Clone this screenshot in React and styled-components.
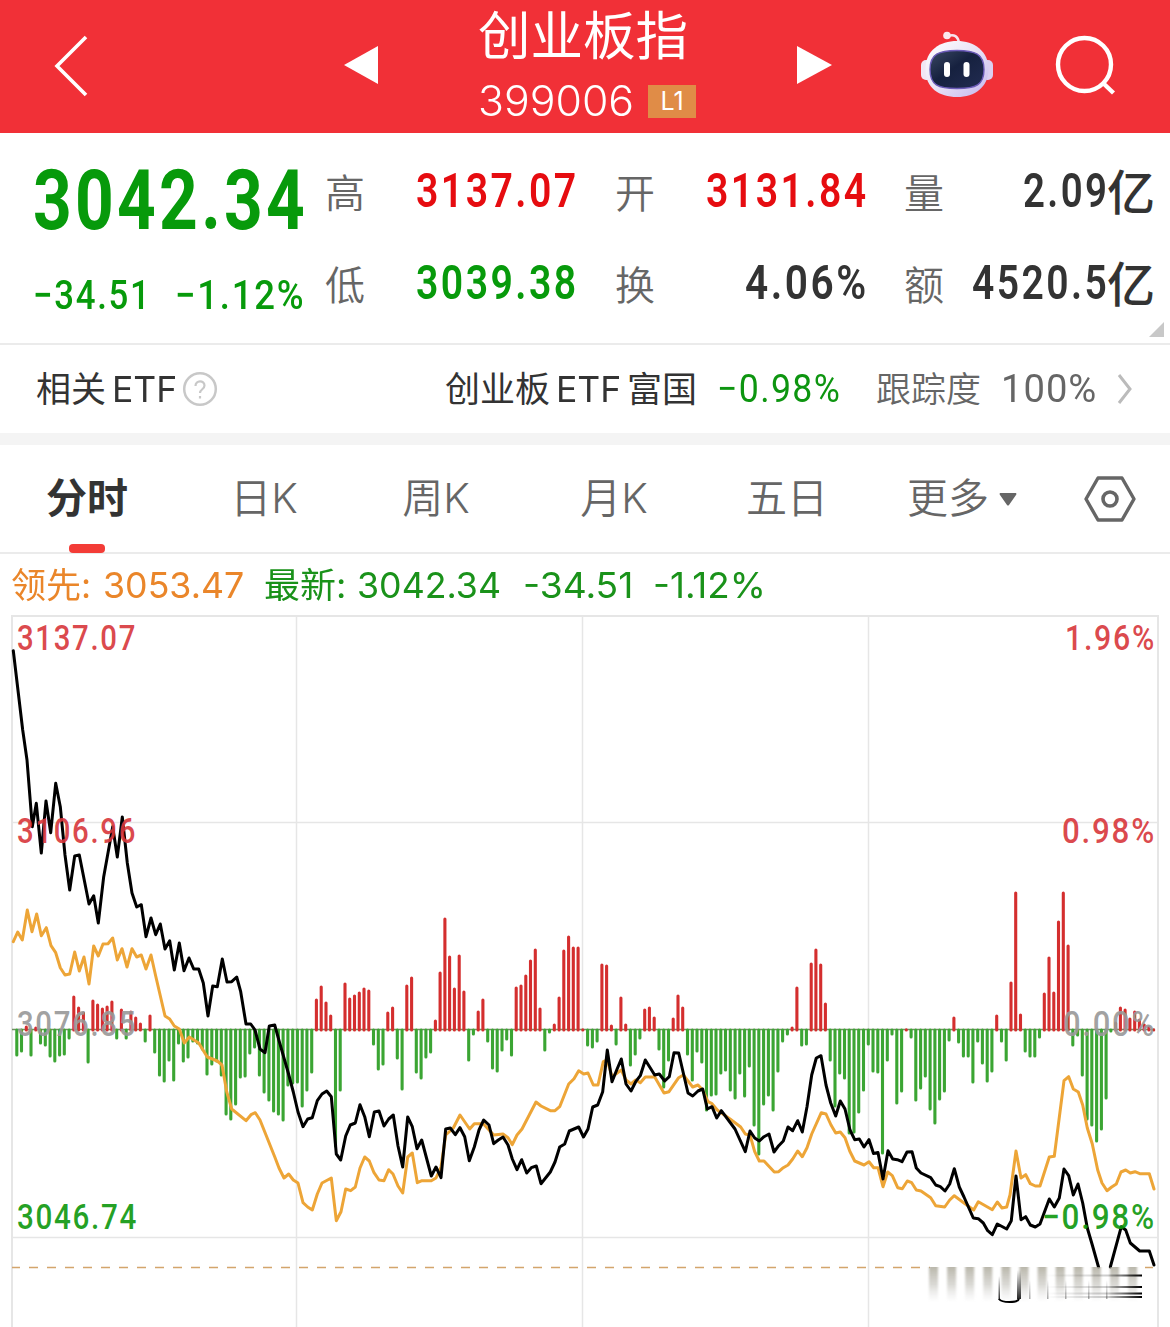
import React, { useLayoutEffect, useRef, useState } from 'react'
import styled, { createGlobalStyle } from 'styled-components'

const GlobalStyle = createGlobalStyle`
  body {
    margin: 0;
    background: #fff;
    font-family: Inter, 'Noto Sans CJK SC', sans-serif;
    color: #333;
  }

  * {
    box-sizing: border-box;
  }

  svg {
    display: block;
    flex: none;
  }
`;

const colors = {
  red: '#e60c10',
  green: '#079a0b',
  ink: '#333',
  grey: '#666',
}

/* ---------- fixed-width text ---------- */

const FitBox = styled.span`
  display: inline-block;
  flex: none;
  width: ${props => props.$width}px;
  white-space: nowrap;
`;

const FitInner = styled.span`
  display: inline-block;
  letter-spacing: ${props => props.$tracking}px;
  transform-origin: 0 50%;
`;

// Squeezes or stretches a run of text so it always fills the given width
const Fit = ({ width, tracking = 0, children }) => {
  const ref = useRef(null)
  const [scale, setScale] = useState(1)

  useLayoutEffect(() => {
    setScale(width / (ref.current.offsetWidth - tracking))
  }, [width, tracking, children])

  return (
    <FitBox $width={width}>
      <FitInner ref={ref} $tracking={tracking} style={{ transform: `scaleX(${scale})` }}>{children}</FitInner>
    </FitBox>
  )
}

/* ---------- header ---------- */

const Header = styled.header`
  display: flex;
  align-items: flex-start;
  height: 133px;
  background: #f13037;
  color: #fff;
`;

const HeaderIcon = styled.div`
  width: ${props => props.$width}px;
  margin: ${props => props.$top}px 0 0 ${props => props.$left}px;
`;

const HeaderTitle = styled.div`
  width: 218px;
  margin-left: 100px;
`;

const IndexName = styled.h1`
  margin: 0;
  height: 78px;
  font-size: 52.5px;
  font-weight: 400;
  line-height: 72px;
  white-space: nowrap;
`;

const IndexCode = styled.div`
  display: flex;
  align-items: center;
  height: 46px;
  font-size: 42px;
  font-weight: 350;
  line-height: 46px;
  gap: 14px;
`;

const LevelBadge = styled.span`
  width: 48px;
  height: 33px;
  background: #e08c47;
  font-size: 25px;
  font-weight: 400;
  line-height: 33px;
  text-align: center;
`;

const Robot = () => (
  <svg width="72" height="68" viewBox="0 0 72 68">
    <defs>
      <linearGradient id="shell" x1="0" y1="0" x2="1" y2="1">
        <stop offset="0" stopColor="#fff" />
        <stop offset="0.5" stopColor="#e9e2f5" />
        <stop offset="1" stopColor="#c3b5ee" />
      </linearGradient>
      <linearGradient id="visor" x1="0" y1="0" x2="1" y2="1">
        <stop offset="0" stopColor="#3a4863" />
        <stop offset="0.45" stopColor="#16213f" />
        <stop offset="1" stopColor="#222c52" />
      </linearGradient>
    </defs>
    <path d="M27 5c6-2 10 0 11 7" fill="none" stroke="#f6e4ee" strokeWidth="2.6" />
    <circle cx="26" cy="4.5" r="3.8" fill="#fbe9ef" />
    <rect x="0" y="29" width="11" height="20" rx="5" fill="#f1e6f4" />
    <rect x="61" y="29" width="11" height="20" rx="5" fill="#dccff0" />
    <path d="M36 10C53 10 67.500 20 67.500 38S54 66 36 66 4.500 57 4.500 38 19 10 36 10z" fill="url(#shell)" />
    <path d="M36 19.500C54 19.500 63 23 63 38.500S55 57.500 36 57.500 9 54 9 38.500 18 19.500 36 19.500z" fill="url(#visor)" stroke="#6b5bb8" strokeWidth="1.400" />
    <rect x="23" y="31" width="6" height="15" rx="3" fill="#fff" />
    <rect x="42.500" y="31" width="6" height="15" rx="3" fill="#fff" />
  </svg>
)

/* ---------- quote ---------- */

const Quote = styled.section`
  position: relative;
  display: grid;
  grid-template-columns: 292px 251px 250px 250px;
  height: 212px;
  padding-left: 33px;
  border-bottom: 2px solid #ebebeb;
`;

const LastPrice = styled.div`
  padding-top: 18px;
  font-family: Roboto, sans-serif;
  font-weight: 700;
  font-size: 83px;
  line-height: 100px;
  color: ${colors.green};
`;

const Change = styled.div`
  display: flex;
  gap: 25px;
  margin-top: 23px;
  font-size: 41px;
  font-weight: 500;
  line-height: 42px;
`;

const StatColumn = styled.div`
  display: flex;
  flex-direction: column;
  margin-left: ${props => props.$shift}px;
  padding-top: 12px;
`;

const Stat = styled.div`
  display: flex;
  align-items: center;
  justify-content: space-between;
  width: 251px;
  height: 92px;
`;

const StatLabel = styled.span`
  color: ${colors.grey};
  font-family: 'Noto Sans CJK SC', sans-serif;
  font-size: 40px;
  line-height: 92px;
  font-weight: 350;
`;

const StatValue = styled.span`
  display: flex;
  color: ${props => props.$color};
  font-family: Roboto, sans-serif;
  font-size: 48px;
  font-weight: 600;
  line-height: 92px;
`;

const Unit = styled.span`
  font-family: 'Noto Sans CJK SC', sans-serif;
  font-size: 48px;
  font-weight: 500;
  line-height: 89px;
`;

const Corner = styled.svg`
  position: absolute;
  right: 6px;
  bottom: 6px;
`;

const statColumns = [
  [
    { label: '高', value: '3137.07', width: 160, color: colors.red },
    { label: '低', value: '3039.38', width: 160, color: colors.green },
  ],
  [
    { label: '开', value: '3131.84', width: 160, color: colors.red },
    { label: '换', value: '4.06%', width: 121, color: colors.ink },
  ],
  [
    { label: '量', value: '2.09', unit: '亿', width: 84, color: colors.ink },
    { label: '额', value: '4520.5', unit: '亿', width: 135, color: colors.ink },
  ],
]

/* ---------- related ETF ---------- */

const EtfRow = styled.section`
  display: flex;
  align-items: center;
  height: 88px;
  padding-left: 36px;
  font-size: 35px;
  line-height: 88px;
`;

const EtfText = styled.span`
  display: flex;
  gap: 6px;
  margin-left: ${props => props.$left || 0}px;
  color: ${props => props.$color || colors.ink};
  font-weight: ${props => props.$weight || 400};
`;

const EtfNumber = styled.span`
  margin-left: ${props => props.$left}px;
  color: ${props => props.$color};
  font-family: Roboto, sans-serif;
  font-size: 39px;
  font-weight: ${props => props.$weight};
`;

const HelpIcon = styled.svg`
  margin-left: 5px;
`;

const Band = styled.div`
  height: 12px;
  background: #f4f4f4;
`;

/* ---------- tabs ---------- */

const Tabs = styled.nav`
  display: flex;
  height: 109px;
  padding-left: 46px;
  border-bottom: 2px solid #ebebeb;
`;

const Tab = styled.div`
  display: flex;
  flex-direction: column;
  align-items: center;
  width: ${props => props.$width}px;
  margin-right: ${props => props.$gap}px;
  color: ${props => (props.$active ? colors.ink : colors.grey)};
  font-size: 41px;
  font-weight: ${props => (props.$active ? 700 : 350)};
  line-height: 107px;
  white-space: nowrap;
`;

const TabLabel = styled.span`
  height: 99px;
`;

const TabMark = styled.i`
  width: 36px;
  height: 9px;
  flex: none;
  border-radius: 4px;
  background: #f33c37;
`;

const MoreArrow = styled.svg`
  margin: 48px 67px 0 0;
`;

const Hexagon = styled.svg`
  margin-top: 30px;
`;

const tabs = [
  { label: '分时', width: 82, gap: 102, active: true },
  { label: '日K', width: 68, gap: 103 },
  { label: '周K', width: 70, gap: 109 },
  { label: '月K', width: 68, gap: 98 },
  { label: '五日', width: 82, gap: 79 },
  { label: '更多', width: 82, gap: 10 },
]

/* ---------- legend ---------- */

const Legend = styled.div`
  display: flex;
  height: 61px;
  padding-left: 11px;
  font-size: 35.5px;
  line-height: 63px;
`;

const LegendItem = styled.span`
  margin-right: ${props => props.$gap}px;
  color: ${props => props.$color};
`;

const legend = [
  { text: '领先:', width: 80, gap: 12, color: '#ea862a' },
  { text: '3053.47', width: 141, gap: 20, color: '#ea862a' },
  { text: '最新:', width: 82, gap: 11, color: '#1a921a' },
  { text: '3042.34', width: 144, gap: 22, color: '#1a921a' },
  { text: '-34.51', width: 110, gap: 20, color: '#1a921a' },
  { text: '-1.12%', width: 113, gap: 0, color: '#1a921a' },
]

/* ---------- chart ---------- */

const ZERO = 1030
const STEP = 4.757

// one entry per minute, positive is drawn upwards in red
const bars = [
  -26, -22, 4, -26, 3, -14, -16, -27, -32, -26, -25, -9, 34, 23, 18, -33, 30, 26, 22, 24,
  29, -9, 21, -9, 19, 13, 7, -12, 15, -23, -46, -52, -31, -51, -14, -32, -28, -12, -14, -20,
  -45, -35, -32, -46, -85, -90, -75, -48, -47, -24, -18, -46, -63, -71, -82, -85, -91, -56, -54, -53,
  -77, -61, -43, 31, 44, 28, 15, -117, -61, 47, 32, 35, 38, 42, 40, -15, -40, -35, 18, 23,
  -29, -60, 45, 53, -43, -49, -28, -23, 10, 58, 112, 74, 42, 75, 39, -31, -5, 19, 31, -12,
  -39, -42, -21, -10, -26, 43, 45, 55, 70, 81, 22, -21, -3, 6, 33, 80, 94, 83, 83, 1,
  -16, -18, -12, 66, 65, 5, -15, 33, 6, -36, -25, -9, 21, 23, 13, -20, -58, -31, 12, 35,
  23, -25, -51, -22, -33, -81, -66, -65, -44, -41, -61, -69, -44, -67, -37, -96, -125, -75, -66, -81,
  -42, -12, -5, 3, 43, -16, -15, 67, 81, 66, 27, -31, -77, -44, -49, -104, -103, -83, -61, -15,
  -42, -43, -124, -31, -5, -74, -62, 1, -8, -71, -59, -47, -80, -94, -70, -62, -11, 13, -13, -27,
  -27, -53, -12, -34, -52, -42, 15, -12, -31, 48, 138, 16, -22, -27, -27, -8, 37, 73, 38, 109,
  138, 85, -16, -6, -46, -90, -96, -112, -100, -69, -2, 8, 23, 21, 12, 19, 11, 6, 4, 1,
]

const priceLine = `13.3,650.7 22.7,730 27,760 32.3,826.7 36.3,803.3 41.3,853 46,801 50.7,832.7 55.7,783.3 60.3,806.7
  65,855 69.7,890 74.7,856 79.3,855 89,904 93.7,895.7 98.3,923 103.7,876.7 112.7,826.7 117.3,857 122.3,817
  127.3,863 132,893 136.7,907 141.3,904.7 146,936.7 151,918 155.7,934.7 160.3,924 165,949 169.7,940.7
  174.3,970 179.3,943 184,970.7 189,958 193.7,969 198.7,969 203.3,983 208,1016 212.7,986 217.3,986.7
  222.3,959 227,982 231.7,981.7 236.7,977 240.7,991.7 246,1024 250.7,1024 255,1030 260,1049 265,1052.7
  269.3,1026 274.7,1025 279.3,1041.7 288.3,1073 293.3,1092 298,1112 303,1126.7 307.7,1119 312.3,1117.7
  317.3,1100.7 322,1094 326.7,1091 331.3,1096.7 336.3,1154 340.7,1160 345.7,1136 350.3,1125 355.3,1123
  360,1104.7 364.7,1116.7 369.3,1136.7 374.3,1112 379,1111 384,1126 388.7,1119 393.3,1115 398,1146
  402.7,1167 407.7,1117 412.3,1126.7 417,1148.7 421.7,1140 431.3,1176 436,1167 441,1177.7 445.7,1129
  450.3,1128 455.3,1134.7 460,1127.7 464.7,1136.7 469.3,1160.7 474.3,1147 479,1130 483.7,1120 489,1125
  493.7,1143.7 498.3,1140 503,1137 508,1145 512.3,1159 517,1169.7 521.7,1159.7 526.7,1173 531.3,1167.7
  536.3,1166 541,1183.7 550.3,1172 555,1162 559.7,1147 564.7,1144 569.3,1131 578.7,1127 583.5,1137
  588,1129 592.7,1107 597.7,1105 602.7,1091.7 607.3,1050 612,1081.7 616.7,1070 621.3,1059 626,1084
  631,1091 635.7,1081.7 640.3,1075.7 645.3,1060 654.7,1075 659.3,1074 664.7,1081 669.3,1076.7 674,1052.7
  678.7,1053 683.3,1073 688,1093 692.7,1096 698,1091 702.7,1089 707.3,1109 712,1106.7 716.7,1118
  721.3,1110.7 735,1129 745.3,1151.7 750,1131 754.7,1138 759.3,1141 764,1136.7 769,1134 774,1152
  778.7,1145.7 783.3,1141 788,1127 792.7,1130.7 797.7,1120.7 802.3,1132 807,1106.7 811.7,1075 816.3,1058
  821,1055.7 826,1085 830.7,1103 835.7,1116 840.3,1101 845,1109 850,1130 854.7,1139.7 859.3,1139
  864,1147 869,1139.7 873.5,1153.5 878,1152.5 883,1179 888,1150.7 892.7,1159 897.3,1159.7 902,1161.7
  907,1152 912,1151.7 916.3,1168 921,1173 930.7,1177.7 935.7,1185 940.3,1186.7 945,1191 949.7,1184
  954.3,1168.7 959.3,1187 964,1197 973.3,1218 978.3,1218.7 983.3,1223 987.7,1230.7 992.3,1234.7
  997.3,1224 1006.7,1229 1011.3,1220.7 1016,1176 1021,1219.7 1025.7,1216.7 1030.3,1225 1035.3,1227
  1040,1224 1049.3,1199 1054.3,1207 1059.3,1198 1064,1169 1068.7,1175.7 1073.3,1195 1078,1184
  1082.7,1203 1087.3,1228 1092.3,1245 1098.5,1267`

const priceTail = '1110.3,1267 1121.3,1226.7 1125.7,1230 1130.3,1243 1139.7,1251 1149.3,1251 1154,1265'

const leadLine = `13.3,941.7 17.7,932 22.3,940 27.3,910 32,931.7 36.7,914 41.3,935.7 46.3,927.7 51,945.7 55.7,952.7
  60.3,967.7 65,975 69.7,974 74.7,952 79.3,971 84,957 89,984 93.7,946 98.3,956 103,944 108,943.7 112.7,938
  117.3,960 122,948.7 127,967 132,948.7 136.7,957 141.3,955 146,969 151,955 155.7,976 165,1016 169.7,1019
  174.3,1026 179.3,1029 184.3,1043 189.3,1037 198.7,1043 207.3,1057 217.3,1061 222,1065 226.7,1091.7
  231.7,1109 246,1120.7 251,1114.7 255.3,1112.7 260,1120 274.7,1156.7 279,1168 284,1178 288.7,1174
  293.3,1180 298,1183 303,1202.7 307.7,1207 312.3,1210 317.3,1194 322,1183 331.3,1178 336.3,1220.7
  341,1211.7 345.7,1189 350.7,1190.7 355.3,1187 360,1168 364.7,1157 369.3,1161 374,1172.7 379,1180
  384,1180.7 388.7,1169.7 393,1174 398,1186 402.7,1193 407.7,1157 412.3,1153 417.3,1182.7 422,1180.7
  431.3,1180.7 436,1178 441,1167 445.7,1135 453.3,1128 460,1115 469.7,1129 474.3,1123.7 483.3,1123.7
  493.7,1135 503,1134 508,1137.7 512.3,1144.7 517,1135 522,1129 536,1102 541,1106 550.3,1110.7 555,1110.7
  559.7,1106.7 568.7,1084 574,1078.7 578.7,1070.7 583.7,1074 588,1073 593.3,1085 598,1085 603.3,1061.7
  607.3,1060 612,1076.7 621.3,1070 626,1080 631,1084 635.7,1080 640.3,1082.7 645.3,1077 654.7,1077
  664,1093 669,1091.7 678.7,1077.7 683.3,1075 692.7,1087 698,1085 702.7,1090 708,1101.7 712,1103.7
  717.3,1110 730,1119 740.7,1127 745.3,1134 750,1135 754.7,1151.7 759.3,1161 764,1161 774.3,1172
  778.7,1171.7 783.3,1167.7 788,1165 792.7,1159 797.7,1151 802.3,1156.7 807,1147.7 811.7,1134
  821.3,1112.7 826,1114 831,1125 835.7,1133 840.3,1132 845,1137.7 849.7,1151 854.7,1161 864,1165
  869,1161.7 873.7,1167.7 878,1167.7 883,1186.7 887.7,1172 892.3,1175.7 897.7,1187.7 902.3,1188.7
  907.3,1181 911.7,1182.7 916.3,1190 921,1191 930.7,1197.7 935.7,1205.7 944.7,1207 949.7,1200
  954.3,1195.7 964,1203 973.7,1210 978.3,1201.7 992.3,1209.7 997.3,1202 1002,1208 1006.7,1207 1010,1195
  1016,1151 1021,1178 1025.7,1174.7 1030.3,1183.7 1035.3,1186 1040,1186 1049.3,1157 1054.3,1156.3
  1064,1080.7 1068.7,1076.7 1073.3,1089 1078.3,1092 1082.7,1105 1087.3,1128 1092.3,1144 1097.7,1170
  1102,1183 1107,1190.7 1111.7,1187 1116.3,1184 1121,1172 1125.7,1170 1130.3,1173 1135,1171.7
  1139.7,1173.7 1149.3,1173.7 1154,1189`

const axisLabels = [
  { text: '3137.07', x: 17, y: 650, width: 120, color: '#d8383c' },
  { text: '3106.96', x: 17, y: 843, width: 120, color: '#d8383c' },
  { text: '3076.85', x: 17, y: 1036, width: 120, color: '#999' },
  { text: '3046.74', x: 17, y: 1229, width: 121, color: '#0f980f' },
  { text: '1.96%', x: 1065, y: 650, width: 91, color: '#d8383c' },
  { text: '0.98%', x: 1062, y: 843, width: 94, color: '#d8383c' },
  { text: '0.00%', x: 1063, y: 1036, width: 93, color: '#999' },
  { text: '−0.98%', x: 1042, y: 1229, width: 114, color: '#0f980f' },
]

const AxisText = styled.text`
  fill: ${props => props.$color};
  fill-opacity: 0.92;
  font-family: Roboto, sans-serif;
  font-size: 35.5px;
  font-weight: 500;
  letter-spacing: 2px;
`;

const Line = styled.polyline`
  fill: none;
  stroke: ${props => props.$color};
  stroke-width: 3;
  stroke-linejoin: round;
  stroke-linecap: round;
`;

const Grid = styled.path`
  fill: none;
  stroke: #e6e6e6;
  stroke-width: ${props => props.$width};
`;

const Chart = () => (
  <svg width="1170" height="712" viewBox="0 615 1170 712">
    <defs>
      <linearGradient id="fade" x1="0" y1="0" x2="0" y2="1">
        <stop offset="0" stopColor="#a9a697" stopOpacity="0.8" />
        <stop offset="0.5" stopColor="#b5b3aa" stopOpacity="0.5" />
        <stop offset="1" stopColor="#ccc" stopOpacity="0" />
      </linearGradient>
      <linearGradient id="streak" x1="0" y1="0" x2="1" y2="0">
        <stop offset="0" stopColor="#000" stopOpacity="0" />
        <stop offset="0.65" stopColor="#000" stopOpacity="0.2" />
        <stop offset="1" stopColor="#000" />
      </linearGradient>
      <linearGradient id="drip" x1="0" y1="0" x2="0" y2="1">
        <stop offset="0" stopColor="#000" stopOpacity="0" />
        <stop offset="1" stopColor="#000" stopOpacity="0.85" />
      </linearGradient>
      <filter id="soft" x="-0.3" y="0" width="1.6" height="1">
        <feGaussianBlur stdDeviation="1.3 0" />
      </filter>
    </defs>

    <Grid $width="2" d="M12 1327V616H1158V1327" />
    <Grid $width="1.5" d="M296.500 616V1327M582.500 616V1327M868.500 616V1327M12 822.500H1158M12 1237.500H1158" />
    <path d="M12 1267.500H930" stroke="#d3a56c" strokeWidth="1.500" strokeDasharray="9 9" strokeDashoffset="1" />
    <path d="M1145 1267.500h8" stroke="#d3a56c" strokeWidth="1.500" />
    <path d="M12 1029.500H1155" stroke="#6f8f62" strokeWidth="1.500" />

    {bars.map((v, i) => (
      <path
        key={i}
        d={`M${(12 + STEP * (i + 1)).toFixed(1)} ${ZERO}v${v > 0 ? -Math.max(v - 1, 0.1) : -v - 1}`}
        stroke={v > 0 ? '#d42e2e' : '#3ba533'}
        strokeWidth="3.100"
        strokeLinecap="round"
      />
    ))}

    <Line points={leadLine} $color="#eda537" />
    <Line points={priceLine} $color="#000" />
    <Line points={priceTail} $color="#000" />

    {axisLabels.map((l) => (
      <AxisText key={l.text} x={l.x} y={l.y} textLength={l.width} lengthAdjust="spacingAndGlyphs" $color={l.color}>
        {l.text}
      </AxisText>
    ))}

    {Array.from({ length: 12 }, (_, i) => (
      <rect key={i} x={929 + i * 18.1} y="1267" width="9" height="35" fill="url(#fade)" filter="url(#soft)" />
    ))}
    <path d="M999 1299c3 4 18 4 20 0" fill="none" stroke="#000" strokeWidth="2" />
    <rect x="998.500" y="1276" width="1.500" height="24" fill="url(#drip)" />
    <rect x="1017" y="1270" width="4" height="29" fill="url(#drip)" />
    {[1029, 1047, 1065, 1088, 1106].map((x) => (
      <rect key={x} x={x} y="1280" width="1.500" height="19" fill="url(#drip)" opacity="0.400" />
    ))}
    {[1274.5, 1286, 1292.5, 1296].map((y) => (
      <rect key={y} x="1045" y={y} width="97" height="2" fill="url(#streak)" />
    ))}
  </svg>
)

export default function App() {
  return (
    <>
      <GlobalStyle />
      <Header>
        <HeaderIcon $width={34} $left={54} $top={35}>
          <svg width="34" height="62" viewBox="0 0 34 62">
            <path d="M32 2L3 31l29 29" fill="none" stroke="#fff" strokeWidth="3.600" />
          </svg>
        </HeaderIcon>
        <HeaderIcon $width={34} $left={256} $top={46}>
          <svg width="34" height="38" viewBox="0 0 34 38">
            <path d="M34 0v38L0 19z" fill="#fff" />
          </svg>
        </HeaderIcon>
        <HeaderTitle>
          <IndexName>创业板指</IndexName>
          <IndexCode>
            <Fit width={156}>399006</Fit>
            <LevelBadge>L1</LevelBadge>
          </IndexCode>
        </HeaderTitle>
        <HeaderIcon $width={35} $left={101} $top={46}>
          <svg width="35" height="38" viewBox="0 0 35 38">
            <path d="M0 0v38l35-19z" fill="#fff" />
          </svg>
        </HeaderIcon>
        <HeaderIcon $width={72} $left={89} $top={31}>
          <Robot />
        </HeaderIcon>
        <HeaderIcon $width={62} $left={62} $top={35}>
          <svg width="62" height="62" viewBox="0 0 62 62">
            <circle cx="29.500" cy="29.500" r="26.500" fill="none" stroke="#fff" strokeWidth="4.400" />
            <path d="M48 48l10.500 10" stroke="#fff" strokeWidth="4.400" />
          </svg>
        </HeaderIcon>
      </Header>

      <Quote>
        <LastPrice>
          <Fit width={272} tracking={4}>3042.34</Fit>
          <Change>
            <Fit width={117} tracking={2}>−34.51</Fit>
            <Fit width={129} tracking={2}>−1.12%</Fit>
          </Change>
        </LastPrice>
        {statColumns.map((column, i) => (
          <StatColumn key={i} $shift={i * 39}>
            {column.map((s) => (
              <Stat key={s.label}>
                <StatLabel>{s.label}</StatLabel>
                <StatValue $color={s.color}>
                  <Fit width={s.width} tracking={3}>{s.value}</Fit>
                  {s.unit && <Unit>{s.unit}</Unit>}
                </StatValue>
              </Stat>
            ))}
          </StatColumn>
        ))}
        <Corner width="15" height="15" viewBox="0 0 15 15">
          <path d="M15 0v15H0z" fill="#c8c8c8" />
        </Corner>
      </Quote>

      <EtfRow>
        <EtfText>
          <span>相关</span>
          <Fit width={65}>ETF</Fit>
        </EtfText>
        <HelpIcon width="36" height="36" viewBox="0 0 36 36">
          <circle cx="18" cy="18" r="15.800" fill="none" stroke="#c8c8c8" strokeWidth="2.500" />
          <path d="M13.500 15c0-6 9-6 9-.5 0 4-4.500 3.500-4.500 7.500M18 25v2.500" fill="none" stroke="#c8c8c8" strokeWidth="2.200" />
        </HelpIcon>
        <EtfText $left={227}>
          <span>创业板</span>
          <Fit width={65}>ETF</Fit>
          <span>富国</span>
        </EtfText>
        <EtfNumber $left={20} $color="#0d9510" $weight={400}>
          <Fit width={123} tracking={1.5}>−0.98%</Fit>
        </EtfNumber>
        <EtfText $left={36} $color={colors.grey} $weight={350}>跟踪度</EtfText>
        <EtfNumber $left={20} $color={colors.grey} $weight={400}>
          <Fit width={95} tracking={1}>100%</Fit>
        </EtfNumber>
        <svg width="38" height="32" viewBox="0 0 38 32">
          <path d="M23 2l11 14-11 14" fill="none" stroke="#bbb" strokeWidth="3" />
        </svg>
      </EtfRow>
      <Band />

      <Tabs>
        {tabs.map((t) => (
          <Tab key={t.label} $width={t.width} $gap={t.gap} $active={t.active}>
            <TabLabel>{t.label}</TabLabel>
            {t.active && <TabMark />}
          </Tab>
        ))}
        <MoreArrow width="18" height="13" viewBox="0 0 18 13">
          <path d="M1 0h16q1 1 0 2l-7 10q-1 1-2 0L1 2Q0 1 1 0z" fill="#666" />
        </MoreArrow>
        <Hexagon width="52" height="48" viewBox="0 0 52 48">
          <path d="M14 3h24l12 21-12 21H14L2 24z" fill="none" stroke="#666" strokeWidth="3.400" strokeLinejoin="round" />
          <circle cx="26" cy="24" r="7" fill="none" stroke="#666" strokeWidth="3.600" />
        </Hexagon>
      </Tabs>

      <Legend>
        {legend.map((l) => (
          <LegendItem key={l.text} $gap={l.gap} $color={l.color}>
            <Fit width={l.width}>{l.text}</Fit>
          </LegendItem>
        ))}
      </Legend>
      <Chart />
    </>
  )
}
